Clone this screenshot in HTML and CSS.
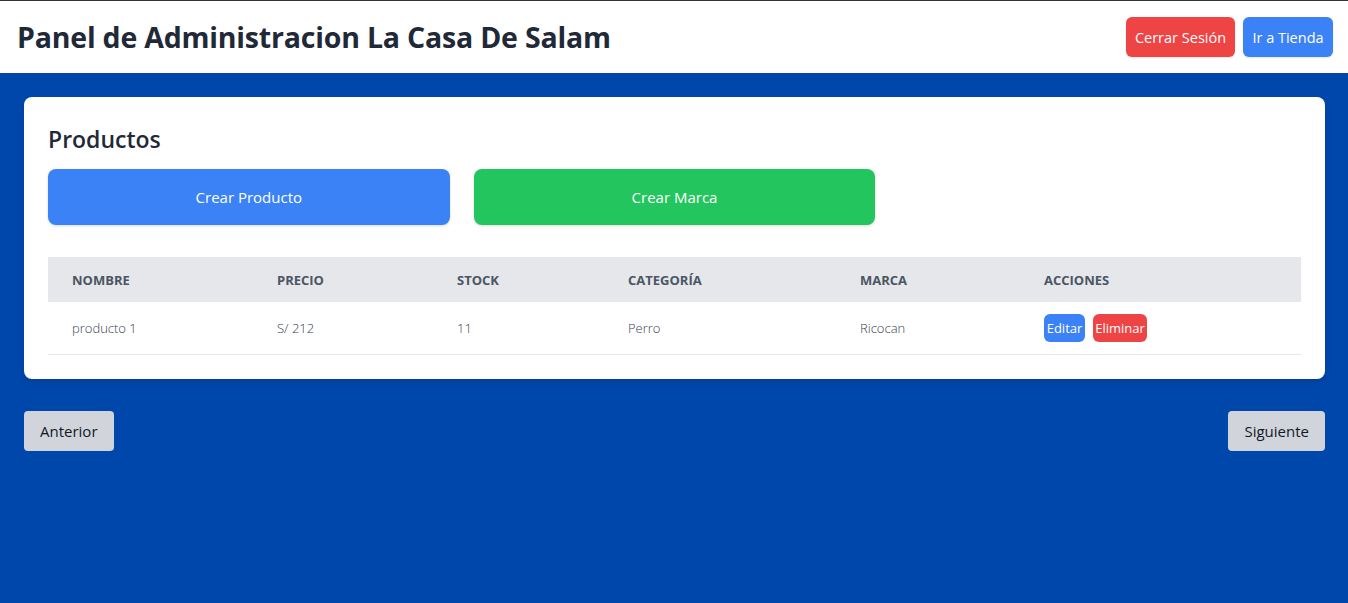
FILE: index.html
```html
<!DOCTYPE html>
<html lang="es">
<head>
<meta charset="utf-8">
<title>Panel de Administracion</title>
<link rel="stylesheet" href="styles.css">
</head>
<body>
<header class="topbar">
  <h1 class="title">Panel de Administracion La Casa De Salam</h1>
  <div class="top-actions">
    <button class="btn btn-red">Cerrar Sesión</button>
    <button class="btn btn-blue">Ir a Tienda</button>
  </div>
</header>
<main class="main">
  <section class="card">
    <h2 class="card-title">Productos</h2>
    <div class="create-grid">
      <button class="big-btn big-blue">Crear Producto</button>
      <button class="big-btn big-green">Crear Marca</button>
    </div>
    <table class="table">
      <thead>
        <tr>
          <th class="c1">NOMBRE</th>
          <th class="c2">PRECIO</th>
          <th class="c3">STOCK</th>
          <th class="c4">CATEGORÍA</th>
          <th class="c5">MARCA</th>
          <th class="c6">ACCIONES</th>
        </tr>
      </thead>
      <tbody>
        <tr>
          <td>producto 1</td>
          <td>S/ 212</td>
          <td>11</td>
          <td>Perro</td>
          <td>Ricocan</td>
          <td><div class="row-actions"><button class="sm-btn sm-blue">Editar</button><button class="sm-btn sm-red">Eliminar</button></div></td>
        </tr>
      </tbody>
    </table>
  </section>
  <nav class="pager">
    <button class="pg-btn">Anterior</button>
    <button class="pg-btn">Siguiente</button>
  </nav>
</main>
</body>
</html>
```

FILE: styles.css
```css
* { box-sizing: border-box; }
html, body { margin: 0; padding: 0; }
body {
  font-family: "Open Sans", "Noto Sans", sans-serif;
  background: #0047ab;
  min-height: 603px;
  color: #1f2937;
}
.topbar {
  background: #fff;
  border-top: 1px solid #333;
  height: 73px;
  display: flex;
  align-items: center;
  justify-content: space-between;
  padding: 0 15px 0 17px;
}
.title {
  margin: 0;
  font-size: 28.5px;
  font-weight: 700;
  color: #1f2937;
  letter-spacing: -0.2px;
}
.top-actions { display: flex; gap: 8px; }
.btn {
  border: none;
  border-radius: 6px;
  height: 40px;
  padding: 0;
  font-family: inherit;
  font-size: 14.5px;
  white-space: nowrap;
  color: #fff;
  box-shadow: 0 1px 2px rgba(0,0,0,0.1);
}
.btn-red { background: #ef4444; width: 109px; }
.btn-blue { background: #3b82f6; width: 90px; }
.main { padding: 24px 23px 24px 24px; }
.card {
  background: #fff;
  border-radius: 8px;
  padding: 24px;
  box-shadow: 0 4px 6px rgba(0,0,0,0.1);
}
.card-title {
  margin: 0 0 12px;
  font-size: 23px;
  font-weight: 600;
  line-height: 36px;
  color: #1f2937;
}
.create-grid {
  display: grid;
  grid-template-columns: repeat(3, 1fr);
  gap: 24px;
  margin-bottom: 32px;
}
.big-btn {
  height: 56px;
  border: none;
  border-radius: 8px;
  font-family: inherit;
  font-size: 15px;
  color: #fff;
  box-shadow: 0 1px 3px rgba(0,0,0,0.15);
}
.big-blue { background: #3b82f6; }
.big-green { background: #22c55e; }
.table {
  width: 100%;
  border-collapse: collapse;
}
.table th {
  background: #e5e7eb;
  height: 45px;
  text-align: left;
  padding: 0 24px;
  font-size: 13px;
  font-weight: 700;
  color: #4b5563;
}
.c1 { width: 205px; }
.c2 { width: 180px; }
.c3 { width: 171px; }
.c4 { width: 232px; }
.c5 { width: 184px; }
.table td {
  height: 52px;
  padding: 0 24px;
  font-size: 13px;
  font-weight: 300;
  color: #374151;
  border-bottom: 1px solid #e5e7eb;
}
.row-actions { display: flex; gap: 8px; }
.sm-btn {
  height: 28px;
  border: none;
  border-radius: 6px;
  padding: 0;
  font-family: inherit;
  font-size: 13px;
  font-weight: 400;
  white-space: nowrap;
  color: #fff;
}
.sm-blue { background: #3b82f6; width: 41px; }
.sm-red { background: #ef4444; width: 54px; }
.pager {
  display: flex;
  justify-content: space-between;
  margin-top: 32px;
}
.pg-btn {
  height: 40px;
  border: none;
  border-radius: 4px;
  background: #d1d5db;
  padding: 0 16px;
  font-family: inherit;
  font-size: 15px;
  color: #111827;
}
```
